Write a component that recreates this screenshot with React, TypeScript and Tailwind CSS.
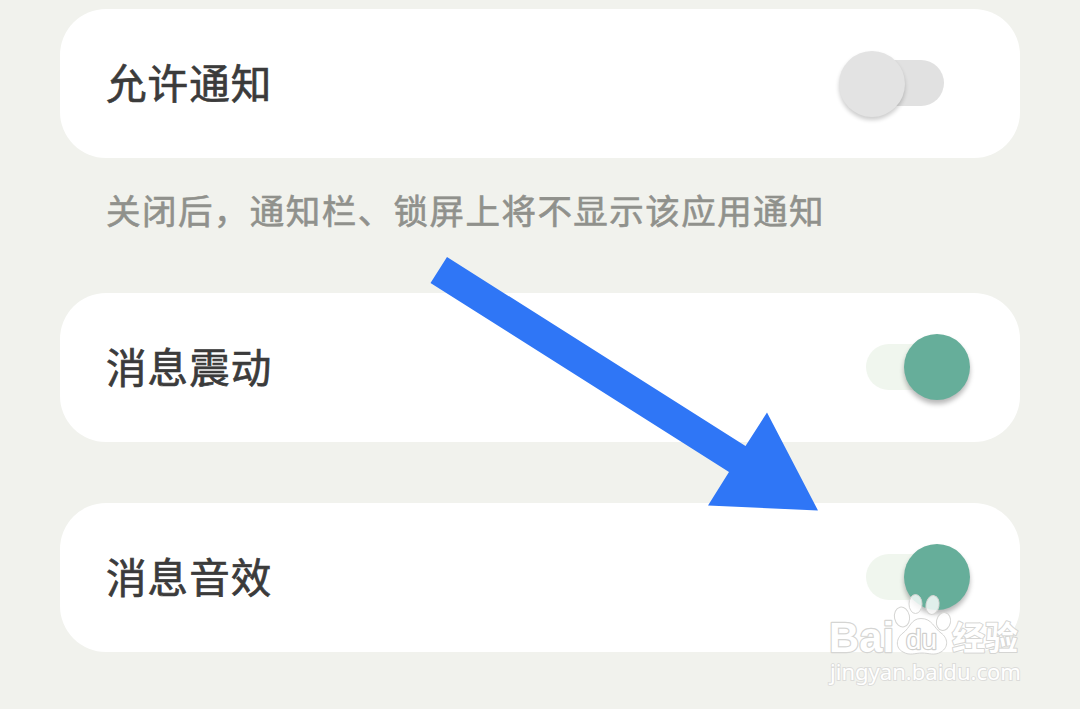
import { useState } from "react";
import clsx from "clsx";

type SwitchProps = {
  label: string;
  checked: boolean;
  onToggle: () => void;
};

const Switch = ({ label, checked, onToggle }: SwitchProps) => {
  return (
    <button
      type="button"
      role="switch"
      aria-label={label}
      aria-checked={checked}
      onClick={onToggle}
      className={clsx(
        "relative mr-[76px] mb-[2px] h-[46px] w-[78px] rounded-full",
        checked ? "bg-[#f0f6ee]" : "bg-[#e1e1e1]"
      )}
    >
      {/* the knob is wider than the track and hangs over its end */}
      <span
        className={clsx(
          "absolute size-[66px] rounded-full",
          checked
            ? "top-[-9.500px] right-[-26px] bg-[#66ae9a] shadow-[0_4px_5px_rgba(0,0,0,0.28)]"
            : "top-[-8.500px] left-[-27px] bg-[#e3e3e3] shadow-[0_3px_4px_rgba(0,0,0,0.2)]"
        )}
      />
    </button>
  );
};

const SettingCard = ({ label, checked, onToggle }: SwitchProps) => {
  return (
    <section className="flex h-[149px] items-center justify-between rounded-[46px] bg-white pl-[46px]">
      <span className="pb-[2px] text-[40.500px] leading-none tracking-[1.100px] text-[#3b3b3b] [-webkit-text-stroke:0.7px_#3b3b3b]">
        {label}
      </span>
      <Switch label={label} checked={checked} onToggle={onToggle} />
    </section>
  );
};

const Arrow = () => {
  return (
    <svg className="pointer-events-none absolute left-[430px] top-[256px]" width="390" height="256" viewBox="430 256 390 256">
      <path d="M447 257 L745.500 446 L767 412.500 L818 510.500 L708 505.500 L729 472 L430.500 283 Z" fill="#2f76f6" />
    </svg>
  );
};

const Watermark = () => {
  return (
    <svg className="pointer-events-none absolute left-[820px] top-[586px]" width="210" height="108" viewBox="820 586 210 108">
      <g fill="#fff" stroke="#d5d5d3" strokeLinejoin="round" paintOrder="stroke" fontWeight="700">
        <text x="829" y="652" fontSize="42" strokeWidth="2.400" fontFamily="'Liberation Sans', sans-serif" textLength="65" lengthAdjust="spacingAndGlyphs">Bai</text>
        <text x="952" y="650" fontSize="32.500" strokeWidth="2" fontFamily="'Noto Sans CJK SC', sans-serif" textLength="66" lengthAdjust="spacingAndGlyphs">经验</text>
      </g>
      <g fill="#fff" fillOpacity="0.8" stroke="#d5d5d3" strokeWidth="1">
        <ellipse cx="902" cy="617" rx="7.500" ry="10" transform="rotate(-12 902 617)" />
        <ellipse cx="915.500" cy="604" rx="6.500" ry="9.500" />
        <ellipse cx="932.500" cy="605" rx="6.500" ry="9.500" transform="rotate(10 932.500 605)" />
        <ellipse cx="943.500" cy="621.500" rx="7" ry="9" transform="rotate(12 943.500 621.500)" />
        <path fillOpacity="1" d="M921 618.500 C911 618.500 910 628 903 633 C896 638 895 648 903 652 C910 656 915 653 922 653 C929 653 934 656 941 652 C949 647 948 638 941 633 C934 628 932 618.500 921 618.500 Z" />
      </g>
      <text x="906" y="649" fontSize="27" fill="#fff" stroke="#cfcfcd" strokeWidth="2.400" strokeLinejoin="round" paintOrder="stroke" fontFamily="'Liberation Sans', sans-serif" textLength="31" lengthAdjust="spacingAndGlyphs">du</text>
      <text x="830" y="679.500" fontSize="21.500" fill="#fff" stroke="#dcdcda" strokeWidth="1.800" paintOrder="stroke" fontFamily="'Noto Sans', sans-serif" textLength="191" lengthAdjust="spacingAndGlyphs">jingyan.baidu.com</text>
    </svg>
  );
};

export default function App() {
  const [notify, setNotify] = useState(false);
  const [vibrate, setVibrate] = useState(true);
  const [sound, setSound] = useState(true);

  return (
    <main className="relative h-[709px] w-[1080px] overflow-hidden bg-[#f1f2ed] px-[60px] pt-[9px] font-['Noto_Sans_CJK_SC',sans-serif]">
      <SettingCard label="允许通知" checked={notify} onToggle={() => setNotify(!notify)} />
      <p className="flex h-[135px] items-start whitespace-nowrap pl-[46px] pt-[34px] text-[34.500px] leading-none tracking-[1.450px] text-[#90918c] [-webkit-text-stroke:0.6px_#90918c]">
        关闭后，通知栏、锁屏上将不显示该应用通知
      </p>
      <div className="flex flex-col gap-[61px]">
        <SettingCard label="消息震动" checked={vibrate} onToggle={() => setVibrate(!vibrate)} />
        <SettingCard label="消息音效" checked={sound} onToggle={() => setSound(!sound)} />
      </div>

      <Arrow />
      <Watermark />
    </main>
  );
}
